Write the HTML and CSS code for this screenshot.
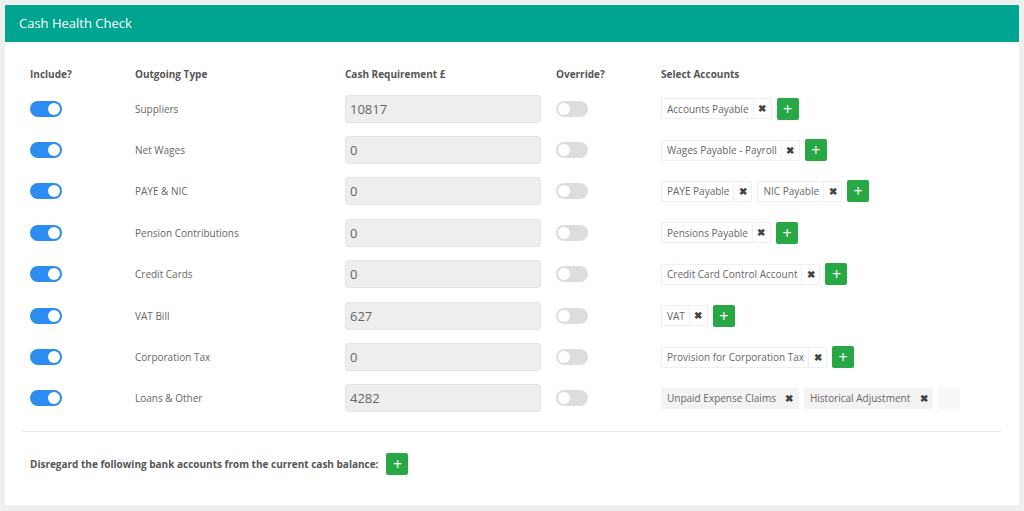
FILE: index.html
```html
<!DOCTYPE html>
<html lang="en">

<head>
    <meta charset="UTF-8">
    <title>Cash Health Check</title>
    <link rel="stylesheet" href="styles.css">
</head>

<body>
    <div class="panel">
        <div class="panel-head">Cash Health Check</div>

        <div class="panel-body">
            <div class="grid">
                <div class="row head">
                    <span>Include?</span>
                    <span>Outgoing Type</span>
                    <span>Cash Requirement £</span>
                    <span>Override?</span>
                    <span>Select Accounts</span>
                </div>

                <div class="row">
                    <span class="switch on"></span>
                    <span class="type">Suppliers</span>
                    <span class="amount">10817</span>
                    <span class="switch"></span>
                    <div class="tags">
                        <span class="tag">Accounts Payable<b>&#10006;</b></span>
                        <button class="add">+</button>
                    </div>
                </div>

                <div class="row">
                    <span class="switch on"></span>
                    <span class="type">Net Wages</span>
                    <span class="amount">0</span>
                    <span class="switch"></span>
                    <div class="tags">
                        <span class="tag">Wages Payable - Payroll<b>&#10006;</b></span>
                        <button class="add">+</button>
                    </div>
                </div>

                <div class="row">
                    <span class="switch on"></span>
                    <span class="type">PAYE &amp; NIC</span>
                    <span class="amount">0</span>
                    <span class="switch"></span>
                    <div class="tags">
                        <span class="tag">PAYE Payable<b>&#10006;</b></span>
                        <span class="tag">NIC Payable<b>&#10006;</b></span>
                        <button class="add">+</button>
                    </div>
                </div>

                <div class="row">
                    <span class="switch on"></span>
                    <span class="type">Pension Contributions</span>
                    <span class="amount">0</span>
                    <span class="switch"></span>
                    <div class="tags">
                        <span class="tag">Pensions Payable<b>&#10006;</b></span>
                        <button class="add">+</button>
                    </div>
                </div>

                <div class="row">
                    <span class="switch on"></span>
                    <span class="type">Credit Cards</span>
                    <span class="amount">0</span>
                    <span class="switch"></span>
                    <div class="tags">
                        <span class="tag">Credit Card Control Account<b>&#10006;</b></span>
                        <button class="add">+</button>
                    </div>
                </div>

                <div class="row">
                    <span class="switch on"></span>
                    <span class="type">VAT Bill</span>
                    <span class="amount">627</span>
                    <span class="switch"></span>
                    <div class="tags">
                        <span class="tag">VAT<b>&#10006;</b></span>
                        <button class="add">+</button>
                    </div>
                </div>

                <div class="row">
                    <span class="switch on"></span>
                    <span class="type">Corporation Tax</span>
                    <span class="amount">0</span>
                    <span class="switch"></span>
                    <div class="tags">
                        <span class="tag">Provision for Corporation Tax<b>&#10006;</b></span>
                        <button class="add">+</button>
                    </div>
                </div>

                <div class="row">
                    <span class="switch on"></span>
                    <span class="type">Loans &amp; Other</span>
                    <span class="amount">4282</span>
                    <span class="switch"></span>
                    <div class="tags disabled">
                        <span class="tag">Unpaid Expense Claims<b>&#10006;</b></span>
                        <span class="tag">Historical Adjustment<b>&#10006;</b></span>
                        <button class="add">+</button>
                    </div>
                </div>
            </div>

            <hr>

            <div class="footer">
                <span>Disregard the following bank accounts from the current cash balance:</span>
                <button class="add">+</button>
            </div>
        </div>
    </div>
</body>

</html>
```

FILE: styles.css
```css
* {
    margin: 0;
    padding: 0;
    box-sizing: border-box;
}

body {
    background-color: #eef0f0;
    font-family: "Open Sans", sans-serif;
    font-size: 10px;
    color: #666;
    padding: 5px 5px 0 5px;
}

.panel {
    background-color: white;
    width: 1014px;
    height: 500px;
}

.panel-head {
    background-color: #00a591;
    color: white;
    font-size: 13px;
    height: 37px;
    line-height: 37px;
    padding-left: 14px;
}

.panel-body {
    padding: 24px 18px 0 17px;
}

.grid {
    padding-left: 8px;
}

.row {
    display: grid;
    grid-template-columns: 105px 210px 211px 105px 1fr;
    align-items: center;
    height: 41.4px;
}

.row.head {
    height: 16px;
    margin-bottom: 6px;
    font-weight: bold;
    color: #555;
}

.switch {
    width: 32px;
    height: 16px;
    border-radius: 8px;
    background-color: #ddd;
    position: relative;
}

.switch::after {
    content: "";
    position: absolute;
    top: 2px;
    left: 2px;
    width: 12px;
    height: 12px;
    border-radius: 50%;
    background-color: white;
}

.switch.on {
    background-color: #2d8cf0;
}

.switch.on::after {
    left: 18px;
}

.amount {
    width: 196px;
    height: 28px;
    line-height: 26px;
    padding-left: 4px;
    font-size: 13px;
    background-color: #eceeef;
    border: 1px solid #e2e5e6;
    border-radius: 3px;
}

.tags {
    display: flex;
    align-items: center;
    gap: 5px;
}

.tag {
    display: flex;
    align-items: center;
    height: 21px;
    padding-left: 5px;
    border: 1px solid #f0f0f0;
    background-color: white;
}

.tag b {
    font-size: 10px;
    color: #444;
    width: 18px;
    text-align: center;
    margin-left: 4px;
    line-height: 19px;
    border-left: 1px solid #f0f0f0;
}

.disabled .tag {
    background-color: #f3f3f3;
    border-color: #f3f3f3;
}

.disabled .tag b {
    border-left-color: #f3f3f3;
}

.add {
    width: 22px;
    height: 22px;
    border: none;
    border-radius: 2px;
    background-color: #28a745;
    color: white;
    font-family: "Open Sans", sans-serif;
    font-size: 16px;
    line-height: 22px;
}

.disabled .add {
    background-color: #f8f8f8;
    color: #f8f8f8;
}

hr {
    border: none;
    border-top: 1px solid #e8e8e8;
    margin-top: 12px;
}

.footer {
    display: flex;
    align-items: center;
    gap: 8px;
    padding: 21px 0 0 8px;
    font-weight: bold;
    color: #555;
}
```
